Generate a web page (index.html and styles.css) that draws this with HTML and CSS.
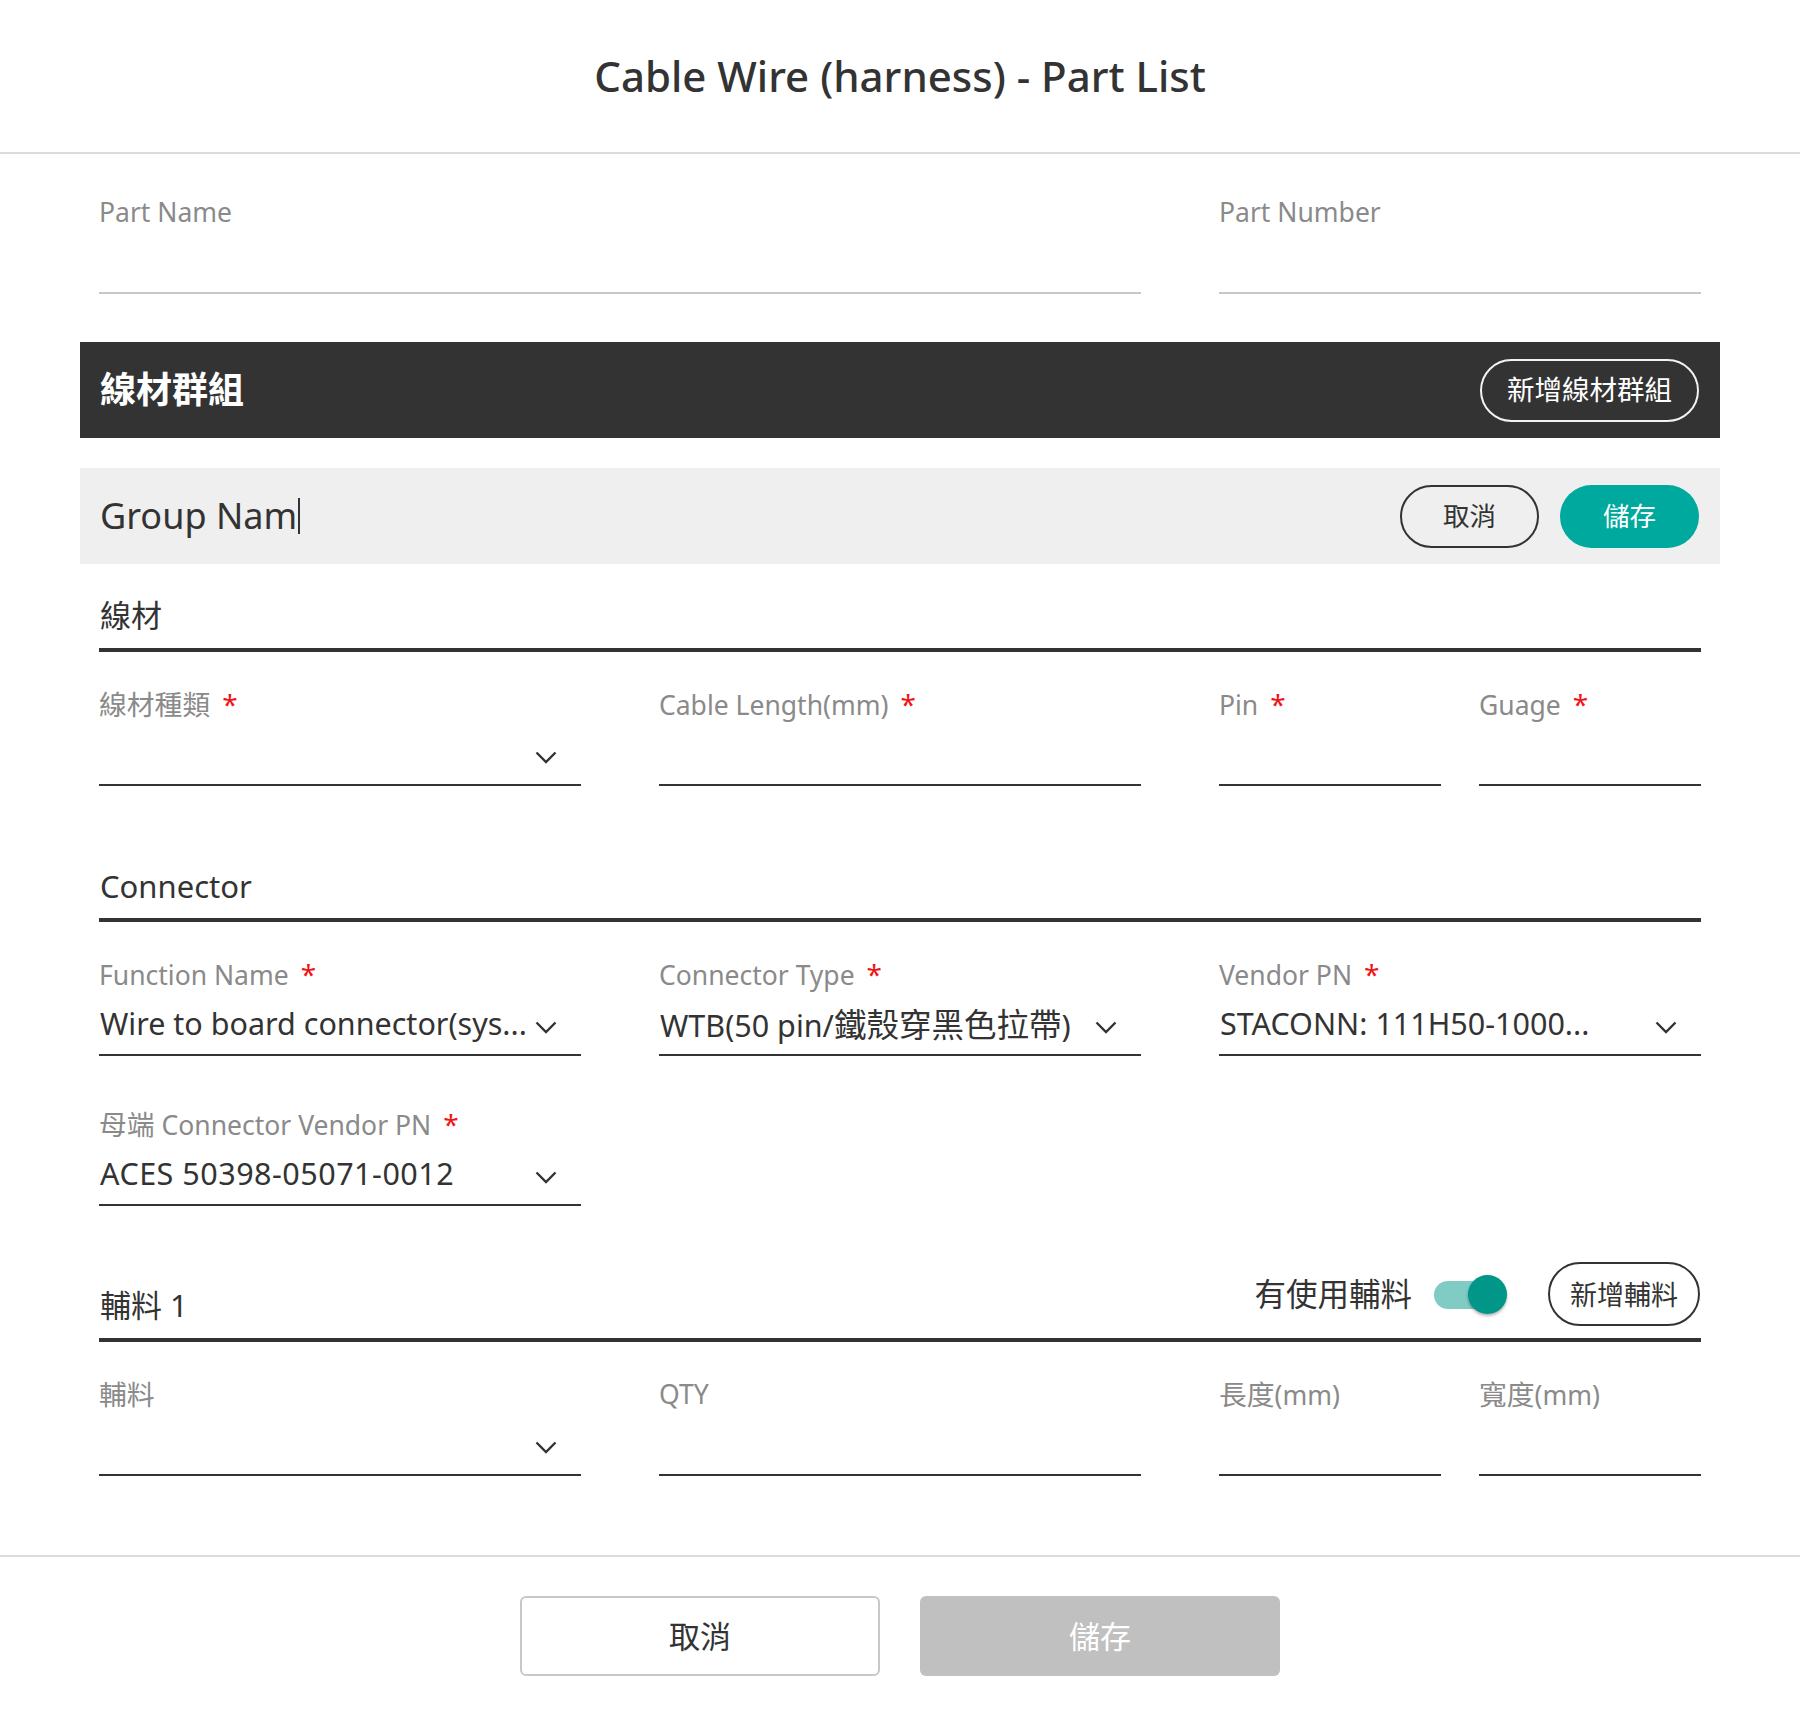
FILE: index.html
```html
<!DOCTYPE html>
<html lang="zh-Hant">
<head>
<meta charset="utf-8">
<title>Cable Wire (harness) - Part List</title>
<link rel="stylesheet" href="styles.css">
</head>
<body>
<header class="header">
  <h1 class="title">Cable Wire (harness) - Part List</h1>
</header>

<main class="main">
  <div class="form">
    <div class="grid top-fields">
      <div class="field field-light span-2">
        <div class="label">Part Name</div>
        <div class="control"></div>
      </div>
      <div class="field field-light">
        <div class="label">Part Number</div>
        <div class="control"></div>
      </div>
    </div>
  </div>

  <div class="group-bar">
    <h2 class="group-bar-title">線材群組</h2>
    <button class="pill pill-light">新增線材群組</button>
  </div>

  <div class="group-edit">
    <div class="group-name">Group Nam<span class="caret"></span></div>
    <div class="group-actions">
      <button class="pill pill-outline">取消</button>
      <button class="pill pill-primary">儲存</button>
    </div>
  </div>

  <div class="form">
    <section class="section sec-wire">
      <div class="section-head"><h3 class="section-title">線材</h3></div>
      <div class="grid row row-wire">
        <div class="field">
          <div class="label"><span class="zh">線材種類</span><span class="req">*</span></div>
          <div class="control select">
            <span class="value"></span>
            <svg class="chev" viewBox="0 0 22 13" width="22" height="13"><path d="M1.5 1.5 L11 11 L20.5 1.5" fill="none" stroke="#333" stroke-width="2.4"/></svg>
          </div>
        </div>
        <div class="field">
          <div class="label">Cable Length(mm)<span class="req">*</span></div>
          <div class="control"></div>
        </div>
        <div class="pair">
          <div class="field">
            <div class="label">Pin<span class="req">*</span></div>
            <div class="control"></div>
          </div>
          <div class="field">
            <div class="label">Guage<span class="req">*</span></div>
            <div class="control"></div>
          </div>
        </div>
      </div>
    </section>

    <section class="section sec-connector">
      <div class="section-head"><h3 class="section-title">Connector</h3></div>
      <div class="grid row row-conn1">
        <div class="field">
          <div class="label">Function Name<span class="req">*</span></div>
          <div class="control select">
            <span class="value">Wire to board connector(sys...</span>
            <svg class="chev" viewBox="0 0 22 13" width="22" height="13"><path d="M1.5 1.5 L11 11 L20.5 1.5" fill="none" stroke="#333" stroke-width="2.4"/></svg>
          </div>
        </div>
        <div class="field">
          <div class="label">Connector Type<span class="req">*</span></div>
          <div class="control select">
            <span class="value">WTB(50 pin/<span class="zh">鐵殼穿黑色拉帶</span>)</span>
            <svg class="chev" viewBox="0 0 22 13" width="22" height="13"><path d="M1.5 1.5 L11 11 L20.5 1.5" fill="none" stroke="#333" stroke-width="2.4"/></svg>
          </div>
        </div>
        <div class="field">
          <div class="label">Vendor PN<span class="req">*</span></div>
          <div class="control select">
            <span class="value">STACONN: 111H50-1000...</span>
            <svg class="chev" viewBox="0 0 22 13" width="22" height="13"><path d="M1.5 1.5 L11 11 L20.5 1.5" fill="none" stroke="#333" stroke-width="2.4"/></svg>
          </div>
        </div>
      </div>
      <div class="grid row row-conn2">
        <div class="field">
          <div class="label"><span class="zh">母端</span> Connector Vendor PN<span class="req">*</span></div>
          <div class="control select">
            <span class="value num">ACES 50398-05071-0012</span>
            <svg class="chev" viewBox="0 0 22 13" width="22" height="13"><path d="M1.5 1.5 L11 11 L20.5 1.5" fill="none" stroke="#333" stroke-width="2.4"/></svg>
          </div>
        </div>
      </div>
    </section>

    <section class="section sec-aux">
      <div class="section-head section-head-aux">
        <h3 class="section-title">輔料 1</h3>
        <div class="aux-tools">
          <span class="aux-toggle-label">有使用輔料</span>
          <span class="toggle"><span class="toggle-track"></span><span class="toggle-knob"></span></span>
          <button class="pill pill-outline pill-small">新增輔料</button>
        </div>
      </div>
      <div class="grid row row-aux">
        <div class="field">
          <div class="label"><span class="zh">輔料</span></div>
          <div class="control select">
            <span class="value"></span>
            <svg class="chev" viewBox="0 0 22 13" width="22" height="13"><path d="M1.5 1.5 L11 11 L20.5 1.5" fill="none" stroke="#333" stroke-width="2.4"/></svg>
          </div>
        </div>
        <div class="field">
          <div class="label">QTY</div>
          <div class="control"></div>
        </div>
        <div class="pair">
          <div class="field">
            <div class="label"><span class="zh">長度</span>(mm)</div>
            <div class="control"></div>
          </div>
          <div class="field">
            <div class="label"><span class="zh">寬度</span>(mm)</div>
            <div class="control"></div>
          </div>
        </div>
      </div>
    </section>
  </div>
</main>

<footer class="footer">
  <button class="btn btn-cancel">取消</button>
  <button class="btn btn-save">儲存</button>
</footer>
</body>
</html>
```

FILE: styles.css
```css
* {
  box-sizing: border-box;
  margin: 0;
  padding: 0;
}

html, body {
  width: 1800px;
  height: 1716px;
  background: #fff;
}

body {
  font-family: "Noto Sans", "Noto Sans CJK TC", sans-serif;
  color: #333;
  overflow: hidden;
}

button {
  font-family: inherit;
  cursor: pointer;
}

/* header */
.header {
  height: 154px;
  border-bottom: 2px solid #dcdcdc;
  display: flex;
  align-items: center;
  justify-content: center;
}

.title {
  font-size: 42px;
  font-weight: 500;
  color: #333;
  line-height: 1.2;
}

/* main */
.main {
  padding: 0 80px;
}

.form {
  padding: 0 19px;
}

.grid {
  display: grid;
  grid-template-columns: 1fr 1fr 1fr;
  column-gap: 78px;
}

.span-2 {
  grid-column: span 2;
}

.pair {
  display: grid;
  grid-template-columns: 1fr 1fr;
  column-gap: 38px;
}

.top-fields {
  margin-top: 40px;
}

.field {
  display: flex;
  flex-direction: column;
}

.label {
  font-size: 26.5px;
  line-height: 36px;
  height: 36px;
  color: #8a8a8a;
  white-space: nowrap;
}

.label .zh {
  font-size: 27.8px;
}

.req {
  color: #f01414;
  margin-left: 12px;
  font-size: 28px;
}

.control {
  height: 62px;
  border-bottom: 2px solid #333;
  display: flex;
  align-items: center;
  justify-content: space-between;
  padding: 0 24px 0 1px;
  box-sizing: content-box;
}

.field-light .control {
  border-bottom-color: #c8c8c8;
}

.value {
  font-size: 30.5px;
  color: #333;
  white-space: nowrap;
}

.value .zh {
  font-size: 32.5px;
}

.value.num {
  letter-spacing: 0.5px;
}

.chev {
  flex: none;
  margin-top: 8px;
}

/* group bar */
.group-bar {
  margin-top: 48px;
  height: 96px;
  background: #333;
  display: flex;
  align-items: center;
  justify-content: space-between;
  padding: 0 21px 0 20px;
}

.group-bar-title {
  font-size: 36px;
  font-weight: 700;
  color: #fff;
  line-height: 1;
}

.pill {
  height: 63px;
  border-radius: 32px;
  display: inline-flex;
  align-items: center;
  justify-content: center;
  font-size: 26.5px;
  line-height: 1;
  background: transparent;
}

.pill-light {
  width: 219px;
  border: 2px solid #f2f2f2;
  color: #fff;
  font-size: 27.5px;
}

.group-edit {
  margin-top: 30px;
  height: 96px;
  background: #efefef;
  display: flex;
  align-items: center;
  justify-content: space-between;
  padding: 0 21px 0 20px;
}

.group-name {
  font-size: 36px;
  color: #333;
  display: flex;
  align-items: center;
  line-height: 1.2;
}

.caret {
  display: inline-block;
  width: 2px;
  height: 36px;
  background: #333;
  margin-left: 1px;
}

.group-actions {
  display: flex;
  gap: 21px;
}

.pill-outline {
  width: 139px;
  border: 2px solid #333;
  color: #333;
}

.pill-primary {
  width: 139px;
  border: none;
  background: #00a99d;
  color: #fff;
}

/* sections */
.section-head {
  border-bottom: 4px solid #333;
  padding-bottom: 13px;
}

.section-title {
  font-size: 31px;
  font-weight: 400;
  line-height: 40px;
  color: #333;
  padding-left: 1px;
}

.sec-wire .section-head {
  margin-top: 31px;
}

.row-wire {
  margin-top: 34px;
}

.sec-connector .section-head {
  margin-top: 80px;
  padding-bottom: 12px;
}

.row-conn1 {
  margin-top: 34px;
}

.row-conn2 {
  margin-top: 50px;
}

.section-head-aux {
  margin-top: 56px;
  display: flex;
  align-items: flex-end;
  justify-content: space-between;
  padding-bottom: 12px;
}

.section-head-aux .section-title {
  margin-bottom: 1px;
}

.aux-tools {
  display: flex;
  align-items: center;
  margin-right: 1px;
}

.aux-toggle-label {
  font-size: 31.5px;
  line-height: 1;
  color: #333;
}

.toggle {
  position: relative;
  display: inline-block;
  width: 73px;
  height: 39px;
  margin-left: 22px;
  margin-right: 41px;
}

.toggle-track {
  position: absolute;
  left: 0;
  top: 6px;
  width: 64px;
  height: 28px;
  border-radius: 14px;
  background: #80cbc4;
}

.toggle-knob {
  position: absolute;
  right: 0;
  top: 0;
  width: 39px;
  height: 39px;
  border-radius: 50%;
  background: #009688;
  box-shadow: 0 2px 3px rgba(0, 0, 0, 0.3);
}

.pill-small {
  width: 152px;
  height: 64px;
  font-size: 27px;
}

.row-aux {
  margin-top: 34px;
}

/* footer */
.footer {
  margin-top: 79px;
  border-top: 2px solid #dcdcdc;
  padding-top: 39px;
  display: flex;
  justify-content: center;
  gap: 40px;
}

.btn {
  width: 360px;
  height: 80px;
  border-radius: 6px;
  font-size: 31px;
  line-height: 1;
  display: inline-flex;
  align-items: center;
  justify-content: center;
}

.btn-cancel {
  background: #fff;
  border: 2px solid #c8c8c8;
  color: #333;
}

.btn-save {
  background: #c0c0c0;
  border: none;
  color: #fff;
}
```
